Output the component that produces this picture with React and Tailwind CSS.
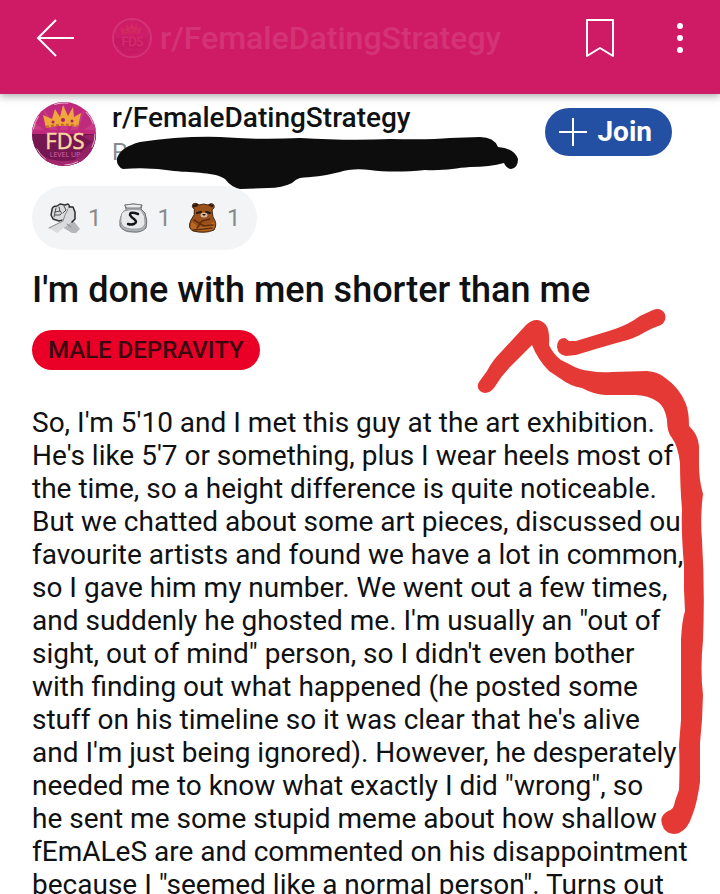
const awards = [
  { name: "Fist bump", count: 1, Icon: HandsIcon },
  { name: "Money bag", count: 1, Icon: BagIcon },
  { name: "Bear hug", count: 1, Icon: BearIcon },
];

const lines = [
  "So, I'm 5'10 and I met this guy at the art exhibition.",
  "He's like 5'7 or something, plus I wear heels most of",
  "the time, so a height difference is quite noticeable.",
  "But we chatted about some art pieces, discussed our",
  "favourite artists and found we have a lot in common,",
  "so I gave him my number. We went out a few times,",
  "and suddenly he ghosted me. I'm usually an \"out of",
  "sight, out of mind\" person, so I didn't even bother",
  "with finding out what happened (he posted some",
  "stuff on his timeline so it was clear that he's alive",
  "and I'm just being ignored). However, he desperately",
  "needed me to know what exactly I did \"wrong\", so",
  "he sent me some stupid meme about how shallow",
  "fEmALeS are and commented on his disappointment",
  "because I \"seemed like a normal person\". Turns out",
];

function CommunityLogo({ className }) {
  return (
    <svg viewBox="0 0 64 64" className={className} aria-hidden="true">
      <defs>
        <clipPath id="logo-clip">
          <circle cx="32" cy="32" r="32" />
        </clipPath>
      </defs>
      <g clipPath="url(#logo-clip)">
        <rect width="64" height="64" fill="#c02a7c" />
        <path d="M32 0L36 28H28ZM10 4L26 28H18ZM54 4L46 28H38ZM0 18L12 28H0ZM64 18L52 28H64Z" fill="#c93a84" />
        <rect y="32" width="64" height="32" fill="#751650" />
        <path d="M50 34L64 42V32ZM45 54L64 36V60H42Z" fill="#962065" />
        <path d="M0 50Q32 68 64 50V64H0Z" fill="#a3276c" />
        <circle cx="32" cy="32" r="31" fill="none" stroke="#e9b9d2" strokeWidth="1" strokeDasharray="14 20" />
      </g>
      <path d="M14 26L11 13L20 17L23 7L28 15L31 3L36 14L41 5L42 15L49 11L46 25Q30 22 14 26Z" fill="#f0a63a" />
      <path d="M14 25Q30 21 46 24" stroke="#c06a2c" strokeWidth="2" strokeDasharray="3 2" fill="none" />
      <g fill="#a52368">
        <circle cx="21" cy="20" r="1.5" />
        <circle cx="31" cy="18" r="2" />
        <circle cx="40" cy="19" r="1.5" />
      </g>
      <g textAnchor="middle" fontFamily="Open Sans, sans-serif">
        <text x="33" y="47" fontSize="22" fill="#fbd5a4" stroke="#fbd5a4" strokeWidth="0.5">FDS</text>
        <text x="33" y="55" fontSize="7" fill="#dc68ab">LEVEL UP</text>
      </g>
    </svg>
  );
}

function HandsIcon() {
  return (
    <svg viewBox="0 0 32 32" className="size-8" strokeLinejoin="round" strokeLinecap="round">
      <path d="M17 19L24 17L32 27L28 31H24L14 25Z" fill="#b4b7b9" />
      <path d="M4 8Q4 4 9 4L12 2L17 3L20 2Q23 4 21 10L19 17L11 19L5 17L3 13Z" fill="#d9dbdc" stroke="#303234" strokeWidth="1.5" />
      <path d="M8 6L6 15M11 5L12 9L7 10M12 9Q15 11 12 13L7 13M16 4L18 8L15 11" stroke="#4d5052" fill="none" />
      <path d="M17 12L21 5L25 5L27 10L27 17L21 22L9 31L1 26L14 19L15 16Z" fill="#d9dbdc" />
      <path d="M21 5L25 5L27 10V17L24 20" stroke="#27292b" strokeWidth="1.5" fill="none" />
      <path d="M20 7L17 13L15 19L1 26M19 22L23 25" stroke="#85888a" fill="none" />
    </svg>
  );
}

function BagIcon() {
  return (
    <svg viewBox="0 0 32 32" className="size-8" strokeLinejoin="round" strokeLinecap="round">
      <path d="M8 7L7 3Q15 1 24 3L23 7L27 11Q30 19 28 26Q23 31 15 30Q5 30 2 24Q1 14 6 10Z" fill="#aeb1b3" stroke="#6b6e70" />
      <path d="M7 3Q15 1 24 3L22 6H9Z" fill="#eceeef" stroke="#77797b" />
      <path d="M6 9Q14 6 23 8Q28 14 27 22Q25 27 19 27Q8 28 4 23Q2 20 3 15Q3 11 6 9Z" fill="#e7e9ea" stroke="#9b9ea0" />
      <path d="M20 12Q12 9 12 13Q13 15 16 17Q20 20 16 22Q13 23 10 22" fill="none" stroke="#151617" strokeWidth="2.5" />
    </svg>
  );
}

function BearIcon() {
  return (
    <svg viewBox="0 0 32 32" className="size-8" strokeLinejoin="round" strokeLinecap="round">
      <path d="M7 7Q4 5 6 2Q9 0 12 3Q17 1 21 3Q25 0 27 3Q28 6 25 8L26 15Q31 22 27 28Q18 32 6 29Q0 26 4 18L7 13Z" fill="#9c5119" stroke="#482812" />
      <path d="M7 4L10 3M25 4L23 3" stroke="#2c1b12" strokeWidth="2.5" />
      <path d="M10 11L14 10M19 10L23 11" stroke="#1e1712" strokeWidth="2" />
      <ellipse cx="17" cy="13" rx="3.5" ry="2.5" fill="#d9b99e" />
      <path d="M15 12H19L17 14Z" fill="#1b1513" />
      <path d="M5 20L12 25L21 24L27 19Q29 26 25 28Q15 30 6 28Q2 25 5 20Z" fill="#b9681f" />
      <path d="M7 18L17 24L26 23M10 26L15 19L23 17M6 28L17 27L25 26" stroke="#5e2e10" strokeWidth="1.5" fill="none" />
    </svg>
  );
}

function TopBar() {
  return (
    <header className="relative z-10 flex h-[94px] items-start bg-[#cf1b66] pt-[14px] text-white shadow-[0_2px_8px_rgba(0,0,0,0.35)]">
      <button aria-label="Back" className="ml-8 flex size-12 items-center justify-center">
        <svg viewBox="0 0 48 48" className="size-12" fill="none" stroke="currentColor" strokeWidth="2">
          <path d="M42 24H6M24 6L6 24L24 42" />
        </svg>
      </button>
      <div className="ml-8 flex h-12 flex-1 items-center gap-2 opacity-10">
        <span className="rounded-full border-2 border-white">
          <CommunityLogo className="size-9" />
        </span>
        <span className="text-[32px] font-medium">r/FemaleDatingStrategy</span>
      </div>
      <button aria-label="Save" className="mr-8 flex size-12 items-center justify-center">
        <svg viewBox="0 0 48 48" className="size-12" fill="none" stroke="currentColor" strokeWidth="2" strokeLinejoin="round">
          <path d="M11 6H37V42L24 34L11 42Z" />
        </svg>
      </button>
      <button aria-label="More options" className="mr-4 flex size-12 items-center justify-center">
        <svg viewBox="0 0 48 48" className="size-12" fill="currentColor">
          <circle cx="24" cy="12" r="3" />
          <circle cx="24" cy="24" r="3" />
          <circle cx="24" cy="36" r="3" />
        </svg>
      </button>
    </header>
  );
}

// marker scribbles drawn over the post
function Markup() {
  return (
    <svg viewBox="0 0 720 894" className="pointer-events-none absolute top-0 left-0 z-20 h-[894px] w-[720px]" aria-hidden="true">
      <path
        fill="#0d0d0d"
        d="M117 158Q121 147 140 142Q180 136 220 137Q260 140 300 138Q350 141 390 139Q430 140 450 138L480 137Q494 137 498 147Q514 148 518 159Q518 168 511 169Q506 168 504 163Q490 167 470 167C455 168 445 171 425 170C405 172 385 172 370 170Q352 168 340 172C325 176 310 177 300 178Q296 179 292 183Q282 188 268 188L240 189Q231 187 225 179C215 172 195 173 174 171Q150 167 123 169Q116 166 117 158Z"
      />
      <path
        fill="#e53935"
        d="M479 382L487 371Q492 361 501 352L526 325Q537 315 546 325Q550 331 549 345Q553 354 561 360L569 364Q579 370 590 371Q600 373 612 372L647 371Q658 372 664 377Q680 388 686 404Q689 412 689 426Q698 434 699 446L699 465Q699 480 703 494Q700 518 702 540Q705 590 703 640Q700 670 703 695L702 720L700 743V782Q697 804 692 816Q688 829 679 833Q670 836 664 829Q657 817 668 811Q674 810 675 801L679 790Q680 767 679 745L681 720V690L681 640Q682 620 685 611L684 590L684 566Q681 530 682 510Q680 485 680 463Q678 446 672 438Q667 432 667 420Q665 407 658 402Q648 395 635 395L605 395Q593 394 582 388Q570 386 561 379L549 371Q538 360 532 345L511 366Q501 376 494 388Q487 396 480 391Q476 387 479 382Z"
      />
      <path
        fill="#e53935"
        d="M557 347Q557 338 565 338L569 341L576 341L612 330Q628 325 640 316L653 310Q661 307 665 314Q667 321 661 325Q652 328 645 332Q634 339 620 342L599 348L576 355L566 356Q558 355 557 347Z"
      />
    </svg>
  );
}

export default function App() {
  return (
    <div className="relative h-screen overflow-hidden bg-white font-[Roboto,sans-serif] text-[#0f1112]">
      <TopBar />
      <main className="px-8 pt-2">
        <div className="flex items-start">
          <CommunityLogo className="size-16 shrink-0" />
          <div className="ml-4 min-w-0 flex-1">
            <a href="#community" className="block text-[28px] leading-8 font-medium">r/FemaleDatingStrategy</a>
            <p className="text-[24px] leading-9 text-[#888b8d]">P</p>
          </div>
          <button className="mt-[6px] mr-4 flex h-12 items-center gap-2 rounded-full bg-[#2450a4] pr-5 pl-3 text-[28px] font-bold text-white">
            <svg viewBox="0 0 32 32" className="size-8" stroke="currentColor" strokeWidth="2">
              <path d="M16 2V30M2 16H30" />
            </svg>
            Join
          </button>
        </div>

        <ul className="mt-4 flex h-16 w-fit items-center gap-4 rounded-full bg-[#f2f4f6] pr-4 pl-4 text-[24px] text-[#888b8d]">
          {awards.map(({ name, count, Icon }) => (
            <li key={name} aria-label={name} className="flex items-center gap-2">
              <Icon />
              <span>{count}</span>
            </li>
          ))}
        </ul>

        <h1 className="mt-5 text-[36px] leading-10 font-medium">I'm done with men shorter than me</h1>
        <div className="mt-5 flex h-10 w-fit items-center rounded-full bg-[#ea0027] px-4 text-[24px] font-medium text-[#3b0610]">
          MALE DEPRAVITY
        </div>

        <p className="mt-9 text-[28px] leading-[33px] whitespace-nowrap">
          {lines.map((line) => (
            <span key={line} className="block">{line}</span>
          ))}
        </p>
      </main>
      <Markup />
    </div>
  );
}
